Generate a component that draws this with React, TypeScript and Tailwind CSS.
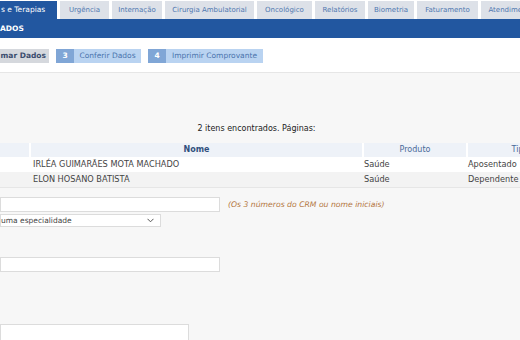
import React, { ReactElement } from 'react';

const tabs = [
  { label: 'Urgência', w: 'w-[49px]' },
  { label: 'Internação', w: 'w-[50px]' },
  { label: 'Cirurgia Ambulatorial', w: 'w-[89px]' },
  { label: 'Oncológico', w: 'w-[55px]' },
  { label: 'Relatórios', w: 'w-[50px]' },
  { label: 'Biometria', w: 'w-[46px]' },
  { label: 'Faturamento', w: 'w-[61px]' },
  { label: 'Atendimento', w: 'w-[60px]' },
];

const rows = [
  { nome: 'IRLÉA GUIMARÃES MOTA MACHADO', produto: 'Saúde', tipo: 'Aposentado' },
  { nome: 'ELON HOSANO BATISTA', produto: 'Saúde', tipo: 'Dependente' },
];

export default function App(): ReactElement {
  return (
    <div
      className="w-[520px] h-[340px] overflow-hidden bg-[#f7f7f7] text-[7.5px] text-[#333]"
      style={{ fontFamily: '"DejaVu Sans", Verdana, sans-serif' }}
    >
      <TopTabs />
      <div className="h-[19px] bg-[#2257a0] flex items-center">
        <span className="text-white font-bold text-[7.5px]">ADOS</span>
      </div>
      <Steps />
      <div className="pt-[50px] flex justify-center">
        <span className="text-[8px] text-[#222] mr-[7px]">2 itens encontrados. Páginas:</span>
      </div>
      <Results />
      <SearchForm />
    </div>
  );
}

function TopTabs(): ReactElement {
  return (
    <div className="h-[19px] bg-white flex flex-row items-end gap-[3px] overflow-hidden whitespace-nowrap text-[7px]">
      <div className="w-[57px] h-[18px] shrink-0 bg-[#2257a0] text-white flex items-center pl-[1px] text-[7.5px]">
        s e Terapias
      </div>
      {tabs.map((t) => (
        <div
          key={t.label}
          className={`${t.w} h-[18px] shrink-0 bg-[#dde1e8] text-[#5078b0] flex items-center justify-center`}
        >
          {t.label}
        </div>
      ))}
    </div>
  );
}

function Steps(): ReactElement {
  return (
    <div className="h-[35px] bg-white border-b border-[#e6e6e6] flex flex-row items-center gap-[7px] pt-[1px]">
      <div className="h-[14px] w-[49px] bg-[#d5d8dd] text-[#3b4d6e] font-bold flex items-center justify-end pr-[3px]">
        mar Dados
      </div>
      <StepButton n="3" label="Conferir Dados" w="w-[67px]" />
      <StepButton n="4" label="Imprimir Comprovante" w="w-[97px]" />
    </div>
  );
}

function StepButton(props: { n: string; label: string; w: string }): ReactElement {
  return (
    <div className="flex flex-row h-[14px]">
      <div className="w-[18px] bg-[#80a6d6] text-white font-bold flex items-center justify-center">
        {props.n}
      </div>
      <div className={`${props.w} bg-[#b9d3f1] text-[#4a74ad] flex items-center justify-center`}>
        {props.label}
      </div>
    </div>
  );
}

function Results(): ReactElement {
  return (
    <div className="mt-[8px] border-b border-[#e6e6e6] overflow-hidden text-[8.2px]">
      <div className="flex flex-row h-[14px] gap-[2px] bg-white text-[8px]">
        <div className="w-[29px] shrink-0 bg-[#eef2f8]" />
        <div className="w-[331px] shrink-0 bg-[#eef2f8] flex items-center justify-center font-bold text-[#30507e]">
          Nome
        </div>
        <div className="w-[102px] shrink-0 bg-[#eef2f8] flex items-center justify-center text-[#4a6a98]">
          Produto
        </div>
        <div className="w-[104px] shrink-0 bg-[#eef2f8] flex items-center justify-center text-[#4a6a98]">
          Tipo
        </div>
      </div>
      {rows.map((r, i) => (
        <div
          key={r.nome}
          className={`flex flex-row h-[15px] items-center text-[#444] whitespace-nowrap ${i % 2 ? 'bg-[#f3f3f3]' : 'bg-white'}`}
        >
          <div className="w-[33px] shrink-0" />
          <div className="w-[331px] shrink-0">{r.nome}</div>
          <div className="w-[104px] shrink-0">{r.produto}</div>
          <div className="flex-1">{r.tipo}</div>
        </div>
      ))}
    </div>
  );
}

function SearchForm(): ReactElement {
  return (
    <div className="flex flex-col pt-[9px]">
      <div className="flex flex-row items-center gap-[8px]">
        <div className="w-[220px] h-[15px] bg-white border border-[#dcdcdc]" />
        <span className="italic text-[7.7px] text-[#b3753c]">(Os 3 números do CRM ou nome iniciais)</span>
      </div>
      <div className="mt-[2px] w-[161px] h-[13px] bg-white border border-[#dcdcdc] flex items-center justify-between pr-[6px]">
        <span className="text-[#444]">uma especialidade</span>
        <svg width="7" height="5" viewBox="0 0 7 5">
          <path d="M0.5 0.8 L3.5 3.8 L6.5 0.8" fill="none" stroke="#555" strokeWidth="1" />
        </svg>
      </div>
      <div className="mt-[30px] w-[220px] h-[15px] bg-white border border-[#dcdcdc]" />
      <div className="mt-[52px] w-[189px] h-[20px] bg-white border border-[#dcdcdc]" />
    </div>
  );
}
